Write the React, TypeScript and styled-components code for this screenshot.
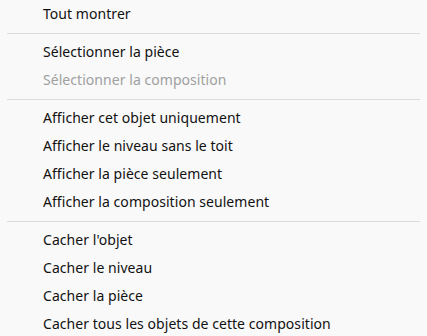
import React from "react";
import styled, { createGlobalStyle } from "styled-components";

const Global = createGlobalStyle`
  html, body { margin: 0; padding: 0; background: #f9f9f9; }
  body { font-family: "Noto Sans", "Open Sans", sans-serif; }
`;

const Menu = styled.div`
  width: 427px;
  height: 336px;
  overflow: hidden;
  background: #f9f9f9;
  display: flex;
  flex-direction: column;
`;

const Item = styled.div<{ $disabled?: boolean }>`
  height: 28px;
  box-sizing: border-box;
  padding-bottom: 2px;
  flex: none;
  display: flex;
  align-items: center;
  padding-left: 43px;
  font-size: 14px;
  letter-spacing: 0.05px;
  color: ${(p) => (p.$disabled ? "#a0a0a0" : "#111")};
  white-space: nowrap;
`;

const Separator = styled.div`
  flex: none;
  height: 10px;
  display: flex;
  align-items: center;
  padding: 0 7px;
  &::after {
    content: "";
    flex: 1;
    height: 1px;
    background: #dcdcdc;
  }
`;

type Entry = { label: string; disabled?: boolean } | "sep";

const entries: Entry[] = [
  { label: "Tout montrer" },
  "sep",
  { label: "Sélectionner la pièce" },
  { label: "Sélectionner la composition", disabled: true },
  "sep",
  { label: "Afficher cet objet uniquement" },
  { label: "Afficher le niveau sans le toit" },
  { label: "Afficher la pièce seulement" },
  { label: "Afficher la composition seulement" },
  "sep",
  { label: "Cacher l'objet" },
  { label: "Cacher le niveau" },
  { label: "Cacher la pièce" },
  { label: "Cacher tous les objets de cette composition" },
];

export default function App() {
  return (
    <>
      <Global />
      <Menu>
        {entries.map((e, i) =>
          e === "sep" ? (
            <Separator key={i} />
          ) : (
            <Item key={i} $disabled={e.disabled}>
              {e.label}
            </Item>
          )
        )}
      </Menu>
    </>
  );
}
